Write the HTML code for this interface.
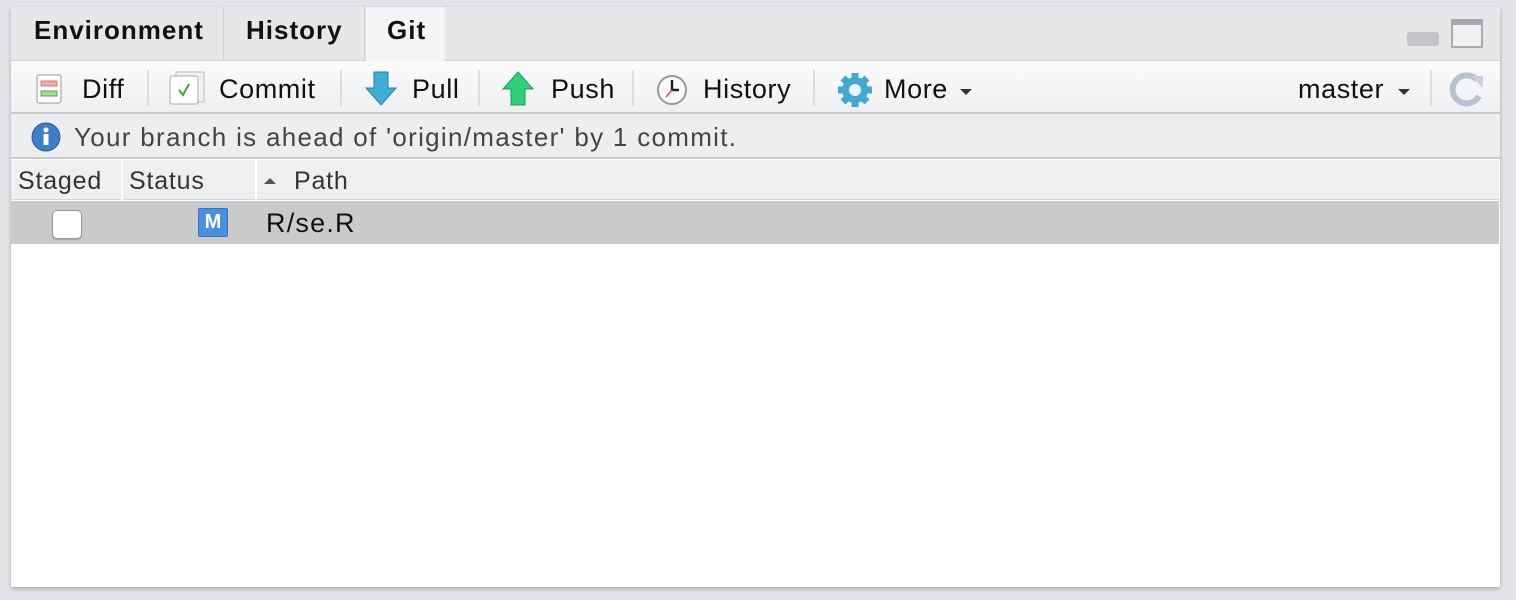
<!DOCTYPE html>
<html><head><meta charset="utf-8"><style>
*{margin:0;padding:0;box-sizing:border-box}
body{width:1516px;height:600px;background:#e3e4e7;font-family:"Liberation Sans","DejaVu Sans",sans-serif;position:relative;overflow:hidden}
.a{position:absolute;white-space:nowrap}
.panel{position:absolute;left:11px;top:7px;width:1489px;height:580px;background:#fff;box-shadow:0 2px 4px rgba(0,0,0,.25)}
.tab{position:absolute;top:7px;height:53px;background:#e6e7e9;border-right:1px solid #cfd0d3;font-weight:bold;font-size:26px;color:#111;padding-top:8px;letter-spacing:1px}
.tb{font-size:27px;color:#111;top:74px;letter-spacing:.6px}
.sep{position:absolute;top:70px;width:2px;height:36px;background:#dcdde0}
.h{font-size:25px;color:#333;top:167px;letter-spacing:.8px}
</style></head><body>
<div class="panel"></div>
<div class="a" style="left:11px;top:7px;width:1489px;height:54px;background:#e6e7e9;border-bottom:1px solid #d0d1d4"></div>
<div class="tab a" style="left:11px;width:213px;padding-left:23px">Environment</div>
<div class="tab a" style="left:224px;width:141px;padding-left:22px">History</div>
<div class="a" style="left:366px;top:7px;width:79px;height:55px;background:#f3f4f5;font-weight:bold;font-size:26px;color:#111;padding:8px 0 0 21px;letter-spacing:1px">Git</div>
<div class="a" style="left:1407px;top:32px;width:32px;height:14px;background:#c4c5c8;border-radius:3px"></div>
<div class="a" style="left:1451px;top:19px;width:32px;height:29px;border:2px solid #a9aaad;border-top-width:6px;background:#f0f0f2"></div>
<div class="a" style="left:11px;top:61px;width:1489px;height:53px;background:linear-gradient(#fbfbfc,#eeeff1);border-bottom:2px solid #c9cacd"></div>
<svg class="a" style="left:34px;top:73px" width="32" height="34"><rect x="3" y="2" width="24" height="28" rx="2" fill="#fff" stroke="#999"/><rect x="7" y="8" width="16" height="5" fill="#f3a9ab" stroke="#d77"/><rect x="7" y="18" width="16" height="5" fill="#9fdc97" stroke="#5a5"/></svg>
<div class="a tb" style="left:82px">Diff</div>
<div class="sep" style="left:147px"></div>
<svg class="a" style="left:168px;top:70px" width="40" height="36"><rect x="8" y="2" width="28" height="30" fill="#f1f1f1" stroke="#bbb"/><rect x="2" y="6" width="28" height="28" rx="2" fill="#fff" stroke="#aaa"/><path d="M11 20l4 5 6-11" stroke="#3a3" stroke-width="2" fill="none"/></svg>
<div class="a tb" style="left:219px">Commit</div>
<div class="sep" style="left:340px"></div>
<svg class="a" style="left:364px;top:70px" width="34" height="38"><path d="M10 2h14v16h8L17 35 2 18h8z" fill="#3eaed6" stroke="#2a7fa8"/></svg>
<div class="a tb" style="left:412px">Pull</div>
<div class="sep" style="left:478px"></div>
<svg class="a" style="left:501px;top:70px" width="34" height="38"><path d="M17 2l15 17h-8v16H10V19H2z" fill="#2fcf7a" stroke="#1f9a55"/></svg>
<div class="a tb" style="left:551px">Push</div>
<div class="sep" style="left:632px"></div>
<svg class="a" style="left:656px;top:74px" width="32" height="32"><circle cx="16" cy="16" r="14" fill="#fafafa" stroke="#999" stroke-width="2"/><path d="M16 6v10h7" stroke="#222" stroke-width="2.5" fill="none"/><path d="M16 16l-6 7" stroke="#e44" stroke-width="1.5"/></svg>
<div class="a tb" style="left:703px">History</div>
<div class="sep" style="left:813px"></div>
<svg class="a" style="left:836px;top:71px" width="38" height="38" viewBox="0 0 38 38"><g fill="#3fa9d4"><circle cx="19" cy="19" r="13"/><g stroke="#3fa9d4" stroke-width="7"><path d="M19 2v34M2 19h34M7 7l24 24M31 7L7 31"/></g></g><circle cx="19" cy="19" r="6" fill="#e9f3f8"/></svg>
<div class="a tb" style="left:884px">More</div>
<svg class="a" style="left:959px;top:88px" width="14" height="8"><path d="M1 1h12L7 7z" fill="#333"/></svg>
<div class="a tb" style="left:1298px">master</div>
<svg class="a" style="left:1397px;top:88px" width="14" height="8"><path d="M1 1h12L7 7z" fill="#333"/></svg>
<div class="sep" style="left:1430px"></div>
<svg class="a" style="left:1447px;top:70px" width="40" height="38"><path d="M30 10A14 14 0 1 0 32 26" stroke="#b9c3d0" stroke-width="6" fill="none"/><path d="M24 6h12v12z" fill="#c8d0da"/></svg>
<div class="a" style="left:11px;top:114px;width:1489px;height:45px;background:#edeef0;border-bottom:2px solid #c9cacd"></div>
<svg class="a" style="left:30px;top:121px" width="32" height="32"><circle cx="16" cy="16" r="14" fill="#3d7fc4" stroke="#2c5f96"/><circle cx="16" cy="9" r="2.5" fill="#fff"/><rect x="13.5" y="13" width="5" height="11" fill="#fff"/></svg>
<div class="a" style="left:74px;top:122px;font-size:26px;color:#444;letter-spacing:1.3px">Your branch is ahead of 'origin/master' by 1 commit.</div>
<div class="a" style="left:11px;top:160px;width:1488px;height:40px;background:#eeeff0;border-bottom:1px solid #d5d6d8"></div>
<div class="a" style="left:121px;top:160px;width:2px;height:40px;background:#fff"></div>
<div class="a" style="left:255px;top:160px;width:2px;height:40px;background:#fff"></div>
<div class="a h" style="left:18px">Staged</div>
<div class="a h" style="left:129px">Status</div>
<svg class="a" style="left:263px;top:177px" width="14" height="8"><path d="M1 7h12L7 1z" fill="#555"/></svg>
<div class="a h" style="left:294px">Path</div>
<div class="a" style="left:11px;top:201px;width:1488px;height:43px;background:#cacaca"></div>
<div class="a" style="left:52px;top:210px;width:30px;height:29px;background:#fff;border:1px solid #999;border-radius:5px;box-shadow:0 1px 1px rgba(0,0,0,.2)"></div>
<div class="a" style="left:198px;top:208px;width:30px;height:29px;background:#4a90e2;border:1px solid #3a73b8;border-radius:2px;color:#fff;font-size:20px;font-weight:bold;text-align:center;line-height:27px">M</div>
<div class="a" style="left:266px;top:208px;font-size:27px;color:#111;letter-spacing:1.2px">R/se.R</div>
</body></html>
